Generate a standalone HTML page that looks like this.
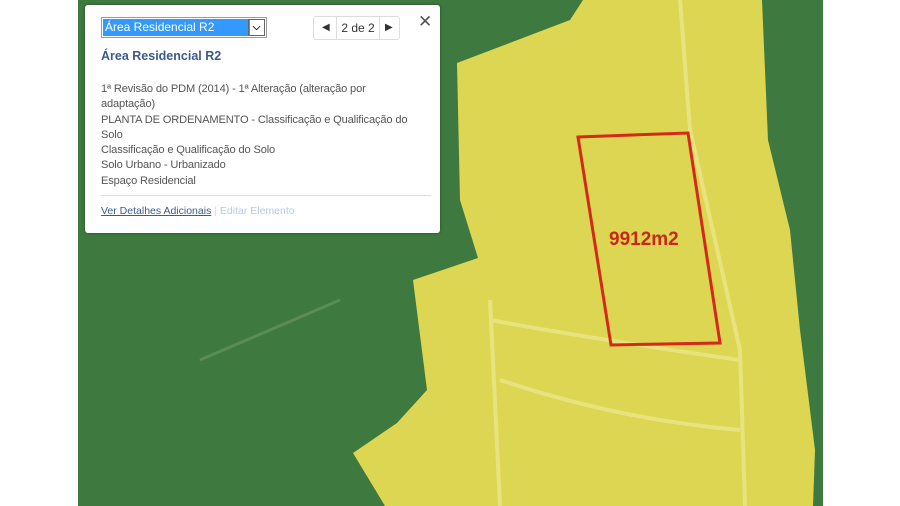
<!DOCTYPE html>
<html><head><meta charset="utf-8"><style>
body{margin:0;width:900px;height:506px;background:#fff;position:relative;overflow:hidden;font-family:"Liberation Sans",sans-serif}
#map{position:absolute;left:78px;top:0;width:745px;height:506px;background:#3e7a3f}
svg{position:absolute;left:0;top:0}
#pop{position:absolute;left:85px;top:5px;width:355px;height:228px;background:#fff;border-radius:3px;box-shadow:0 0 3px rgba(0,0,0,.4)}
#sel{position:absolute;left:16px;top:12px;width:164px;height:19px;border:1px solid #999;background:#fff}
#sel span{position:absolute;left:1px;top:1px;width:145px;height:17px;background:#3399ff;color:#fff;font-size:12px;line-height:17px;padding-left:2px}
#sel b{position:absolute;right:1px;top:1px;width:15px;height:15px;border:1px solid #666;font-size:10px;text-align:center;line-height:15px;color:#000}
#pg{position:absolute;left:228px;top:11px;width:85px;height:22px;border:1px solid #ddd;border-radius:3px;font-size:12px;line-height:22px;color:#333}
#x{position:absolute;left:333px;top:7px;font-size:17px;color:#555}
#t{position:absolute;left:16px;top:44px;font-size:12.5px;font-weight:bold;color:#3d5a8c}
#d{position:absolute;left:16px;top:77px;font-size:11.1px;line-height:15.3px;color:#555;width:335px;letter-spacing:-0.15px}
#hr{position:absolute;left:16px;top:190px;width:330px;border-top:1px solid #ddd}
#l{position:absolute;left:16px;top:200px;font-size:10.5px;color:#3d5a8c}
</style></head><body>
<div id="map"></div>
<svg width="900" height="506">
<path d="M160 120 Q240 100 320 40 M200 360 L340 300" stroke="#5c8c55" stroke-width="3" fill="none"/>
<polygon points="583,0 762,0 768,140 790,230 800,330 815,450 813,506 385,506 353,453 397,423 427,390 413,280 478,258 460,200 457,63 570,20" fill="#ddd652"/>
<path d="M680 0 L690 130 L740 350 L745 506 M490 300 L500 506 M490 320 Q600 340 740 360 M500 380 Q620 420 740 430" stroke="#e8e37f" stroke-width="4" fill="none"/>
<polygon points="578,137 688,133 720,343 611,345" fill="none" stroke="#d42a1a" stroke-width="3"/>
<text x="609" y="245" font-family="Liberation Sans" font-weight="bold" font-size="19" fill="#c8281a">9912m2</text>
</svg>
<div id="pop">
<div id="sel"><span>Área Residencial R2</span><b>⌵</b></div>
<div id="pg"><span style="position:absolute;left:8px;font-size:10px">◀</span><span style="position:absolute;left:22px;width:42px;border-left:1px solid #ddd;border-right:1px solid #ddd;text-align:center">2 de 2</span><span style="position:absolute;left:71px;font-size:10px">▶</span></div>
<div id="x">✕</div>
<div id="t">Área Residencial R2</div>
<div id="d">1ª Revisão do PDM (2014) - 1ª Alteração (alteração por<br>adaptação)<br>PLANTA DE ORDENAMENTO - Classificação e Qualificação do<br>Solo<br>Classificação e Qualificação do Solo<br>Solo Urbano - Urbanizado<br>Espaço Residencial</div>
<div id="hr"></div>
<div id="l"><u>Ver Detalhes Adicionais</u> <span style="color:#ddd">|</span> <span style="color:#b8cbe0">Editar Elemento</span></div>
</div>
</body></html>
